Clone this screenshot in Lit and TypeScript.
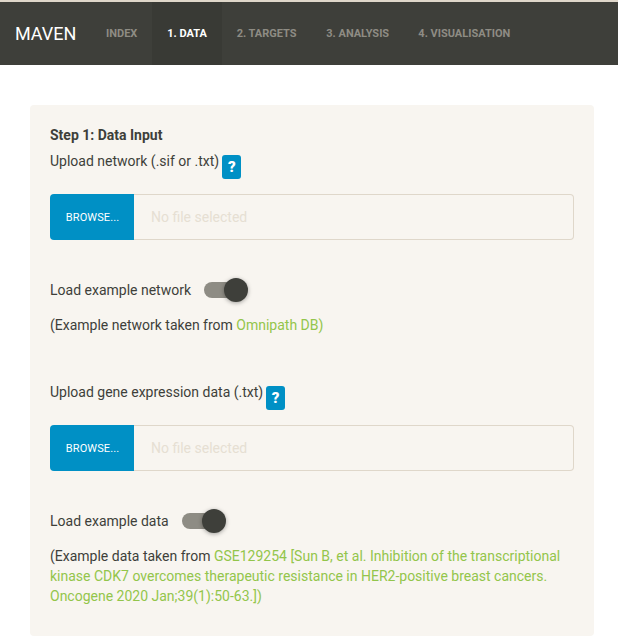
import { LitElement, html, css } from "lit";
import { customElement } from "lit/decorators.js";

@customElement("app-root")
export class AppRoot extends LitElement {
  static styles = css`
    :host {
      display: block;
      font-family: Roboto, "Liberation Sans", sans-serif;
      font-size: 14px;
      line-height: 20px;
      color: #3e3f3a;
      background: #fff;
      height: 642px;
      overflow: hidden;
    }
    .nav {
      display: flex;
      align-items: stretch;
      height: 63px;
      background: #3e3f3a;
      border-top: 2px solid #dfd7ca;
      padding-left: 15px;
    }
    .brand {
      display: flex;
      align-items: center;
      width: 76px;
      color: #fff;
      font-size: 18px;
      flex: none;
    }
    .tab {
      display: flex;
      align-items: center;
      padding: 0 14.7px 0 15px;
      color: #8e8c84;
      font-size: 11px;
      font-weight: 700;
      text-transform: uppercase;
    }
    .tab.active {
      background: #393a35;
      color: #fff;
      padding-left: 15.3px;
    }
    .tab.tight {
      padding-right: 14.2px;
    }
    main {
      padding: 40px 24px 0 30px;
    }
    .well {
      background: #f8f5f0;
      border-radius: 4px;
      height: 531px;
      box-sizing: border-box;
      padding: 20px;
      display: flex;
      flex-direction: column;
    }
    .title {
      font-weight: 700;
      margin: 0 0 6px;
    }
    .label {
      display: flex;
      align-items: flex-start;
    }
    .help {
      width: 19px;
      height: 24px;
      margin-left: 3px;
      margin-top: 4px;
      border-radius: 3px;
      background: #0090c5;
      color: #fff;
      font-weight: 900;
      font-size: 15px;
      display: flex;
      align-items: center;
      justify-content: center;
      line-height: 1;
    }
    .file {
      display: flex;
      height: 46px;
      margin-top: 15px;
    }
    .browse {
      width: 84px;
      flex: none;
      box-sizing: border-box;
      padding: 1px 0 0 1px;
      background: #0090c5;
      color: #fff;
      font-size: 11px;
      font-weight: 400;
      letter-spacing: 0.1px;
      border-radius: 4px 0 0 4px;
      display: flex;
      align-items: center;
      justify-content: center;
    }
    .name {
      flex: 1;
      box-sizing: border-box;
      border: 1px solid #dfd7ca;
      border-left: none;
      border-radius: 0 4px 4px 0;
      display: flex;
      align-items: center;
      padding-left: 17px;
      color: #e6dfd3;
    }
    .toggle-row {
      display: flex;
      align-items: center;
      margin-top: 38px;
      height: 24px;
    }
    .switch {
      position: relative;
      width: 32px;
      height: 16px;
      margin-left: 13px;
      border-radius: 8px;
      background: #8e8c84;
      flex: none;
    }
    .knob {
      position: absolute;
      right: -12px;
      top: -4px;
      width: 24px;
      height: 24px;
      border-radius: 50%;
      background: #3e3f3a;
      box-shadow: 0 1px 4px rgba(0, 0, 0, 0.35);
    }
    .note {
      margin: 13px 0 0;
    }
    a {
      color: #93c54b;
      text-decoration: none;
    }
    .second {
      margin-top: 47.4px;
    }
  `;

  private file() {
    return html`<div class="file">
      <div class="browse">BROWSE...</div>
      <div class="name">No file selected</div>
    </div>`;
  }

  render() {
    return html`
      <nav class="nav">
        <div class="brand">MAVEN</div>
        <div class="tab">Index</div>
        <div class="tab active">1. Data</div>
        <div class="tab">2. Targets</div>
        <div class="tab tight">3. Analysis</div>
        <div class="tab">4. Visualisation</div>
      </nav>
      <main>
        <section class="well">
          <div class="title">Step 1: Data Input</div>
          <div class="label">Upload network (.sif or .txt)<span class="help">?</span></div>
          ${this.file()}
          <div class="toggle-row">Load example network<span class="switch"><span class="knob"></span></span></div>
          <p class="note">(Example network taken from <a>Omnipath DB)</a></p>
          <div class="label second">Upload gene expression data (.txt)<span class="help">?</span></div>
          ${this.file()}
          <div class="toggle-row">Load example data<span class="switch"><span class="knob"></span></span></div>
          <p class="note">(Example data taken from <a>GSE129254 [Sun B, et al. Inhibition of the transcriptional kinase CDK7 overcomes therapeutic resistance in HER2-positive breast cancers. Oncogene 2020 Jan;39(1):50-63.])</a></p>
        </section>
      </main>
    `;
  }
}
